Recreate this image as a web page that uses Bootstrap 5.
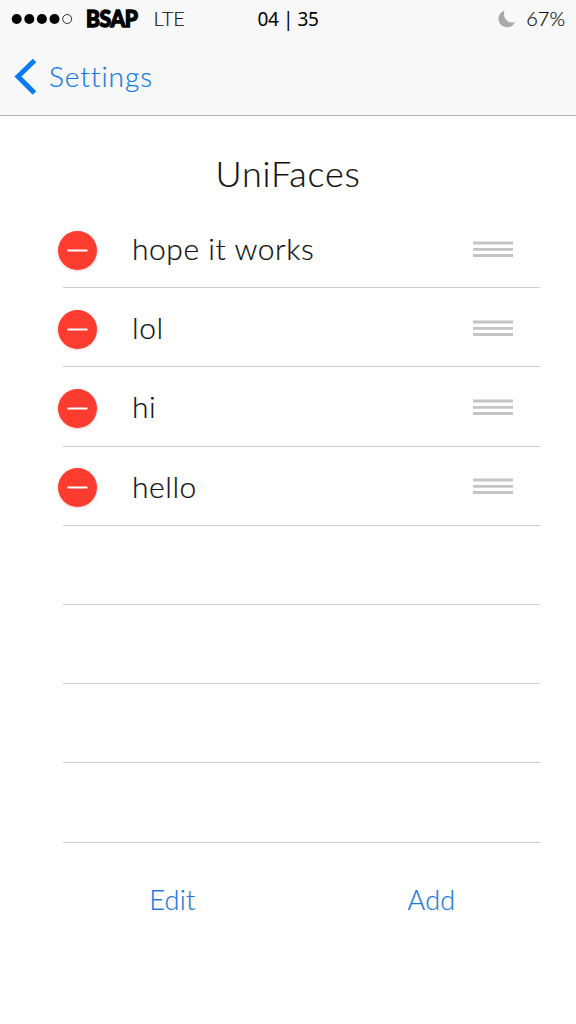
<!DOCTYPE html>
<html lang="en">
<head>
<meta charset="utf-8">
<meta name="viewport" content="width=device-width, initial-scale=1">
<title>UniFaces</title>
<link rel="stylesheet" href="https://cdn.jsdelivr.net/npm/bootstrap@5.3.0/dist/css/bootstrap.min.css">
<style>
body{font-family:Lato,"Open Sans",sans-serif;font-weight:300;color:#111;background:#fff;height:1024px;overflow:hidden;-webkit-text-stroke:.2px currentColor}
.topbar{height:116px;background:#f8f8f8;border-bottom:1px solid #b5b5b5}
.status{height:38px;display:grid;grid-template-columns:1fr auto 1fr;line-height:36px;font-size:20px;padding-left:11px;padding-right:11px}
.carrier{font-weight:900;font-size:21px;letter-spacing:-.4px;-webkit-text-stroke:1.2px #000;color:#000;margin:-2px 0 0 13px;transform:scaleY(1.12)}
.net{margin:-2px 0 0 16px}
.pct{margin-top:-2px}
.clock{font-family:"Noto Sans",sans-serif;font-weight:400;font-size:19px;letter-spacing:-.4px;color:#000;-webkit-text-stroke:0;line-height:38px}
.back{height:77px;padding-left:14px;color:#137ae4;font-size:28px;letter-spacing:.95px;text-decoration:none}
.back span{margin:-2px 0 0 1px}
.title{font-size:36px;letter-spacing:.75px;line-height:40px;margin:37px 0 0;height:56px;font-weight:300}
.faces{margin:0 36px 0 63px}
.face{height:79.2px;border:0;border-bottom:1px solid #cdcdcd!important;border-radius:0;font-size:30px;letter-spacing:.55px;background:none;color:#111;padding:0 27px 0 0}
.face span{margin-top:1px}
.remove{width:39px;height:39px;border:0;padding:0;border-radius:50%;background:#fd3c30;margin:4px 35px 0 -5px;box-shadow:0 1px 3px #fd3c3040}
.grip{margin-top:1px}
.actions{margin:39px 15px 0 43px}
.act{color:#1b78dc;font-size:27px;letter-spacing:.3px;text-decoration:none;line-height:36px}
</style>
</head>
<body>
<header class="topbar">
  <div class="status">
    <div class="d-flex align-items-center">
      <svg width="62" height="12" viewBox="0 0 62 12"><circle cx="5.7" cy="6" r="5"/><circle cx="18.3" cy="6" r="5"/><circle cx="30.9" cy="6" r="5"/><circle cx="43.5" cy="6" r="5"/><circle cx="56.2" cy="6" r="4.5" fill="none" stroke="#333"/></svg>
      <span class="carrier">BSAP</span><span class="net">LTE</span>
    </div>
    <span class="clock">04 | 35</span>
    <div class="d-flex align-items-center justify-content-end">
      <svg class="me-2" width="20" height="20" viewBox="0 0 20 20"><path d="M6.500 1.500A8.600 8.600 0 1 0 17 13C11 15.500 4 9.500 6.500 1.500Z" fill="#aaa"/></svg>
      <span class="pct">67%</span>
    </div>
  </div>
  <a href="#" class="back d-flex align-items-center"><svg class="me-2" width="26" height="40" viewBox="0 0 26 40"><path d="M20.500 3.500L4 19.500L20.500 36" fill="none" stroke="#0b7bf5" stroke-width="5"/></svg><span>Settings</span></a>
</header>
<main>
  <h1 class="title text-center">UniFaces</h1>
  <ul class="faces list-group list-group-flush">
    <li class="face list-group-item d-flex align-items-center"><button class="remove" aria-label="Remove"><svg class="d-block" width="39" height="39"><path d="M9.500 19.500H29.500" stroke="#fff" stroke-width="2"/></svg></button><span>hope it works</span><svg class="grip ms-auto" width="40" height="18"><path d="M0 3H40M0 9.300H40M0 15.500H40" stroke="#c4c4c6" stroke-width="2.800"/></svg></li>
    <li class="face list-group-item d-flex align-items-center"><button class="remove" aria-label="Remove"><svg class="d-block" width="39" height="39"><path d="M9.500 19.500H29.500" stroke="#fff" stroke-width="2"/></svg></button><span>lol</span><svg class="grip ms-auto" width="40" height="18"><path d="M0 3H40M0 9.300H40M0 15.500H40" stroke="#c4c4c6" stroke-width="2.800"/></svg></li>
    <li class="face list-group-item d-flex align-items-center"><button class="remove" aria-label="Remove"><svg class="d-block" width="39" height="39"><path d="M9.500 19.500H29.500" stroke="#fff" stroke-width="2"/></svg></button><span>hi</span><svg class="grip ms-auto" width="40" height="18"><path d="M0 3H40M0 9.300H40M0 15.500H40" stroke="#c4c4c6" stroke-width="2.800"/></svg></li>
    <li class="face list-group-item d-flex align-items-center"><button class="remove" aria-label="Remove"><svg class="d-block" width="39" height="39"><path d="M9.500 19.500H29.500" stroke="#fff" stroke-width="2"/></svg></button><span>hello</span><svg class="grip ms-auto" width="40" height="18"><path d="M0 3H40M0 9.300H40M0 15.500H40" stroke="#c4c4c6" stroke-width="2.800"/></svg></li>
    <li class="face list-group-item"></li>
    <li class="face list-group-item"></li>
    <li class="face list-group-item"></li>
    <li class="face list-group-item"></li>
  </ul>
  <div class="actions row g-0 text-center">
    <div class="col"><a href="#" class="act">Edit</a></div>
    <div class="col"><a href="#" class="act">Add</a></div>
  </div>
</main>
<script src="https://cdn.jsdelivr.net/npm/bootstrap@5.3.0/dist/js/bootstrap.bundle.min.js"></script>
</body>
</html>
